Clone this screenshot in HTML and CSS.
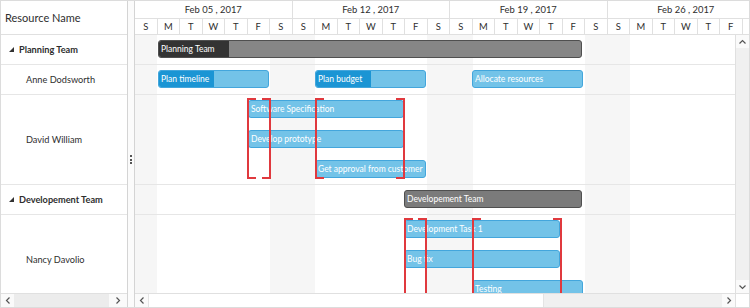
FILE: index.html
```html
<!DOCTYPE html>
<html lang="en">
<head>
  <meta charset="UTF-8">
  <title>Resource Gantt</title>
  <link rel="stylesheet" href="styles.css">
</head>
<body>
  <div class="gantt">
    <!-- Tree grid -->
    <div class="grid-pane">
      <div class="grid-header">Resource Name</div>
      <div class="grid-body">
        <div class="grid-row team row-30">
          <svg class="caret" width="5" height="5" viewBox="0 0 5 5"><polygon points="5,0 5,5 0,5" fill="#333"/></svg>
          Planning Team
        </div>
        <div class="grid-row row-30">Anne Dodsworth</div>
        <div class="grid-row row-90">David William</div>
        <div class="grid-row team row-30">
          <svg class="caret" width="5" height="5" viewBox="0 0 5 5"><polygon points="5,0 5,5 0,5" fill="#333"/></svg>
          Developement Team
        </div>
        <div class="grid-row row-90">Nancy Davolio</div>
      </div>
      <div class="hscroll">
        <div class="sb-btn"><svg width="6" height="7" viewBox="0 0 6 7"><polyline points="4.5,0.5 1.5,3.5 4.5,6.5" fill="none" stroke="#555" stroke-width="1.2"/></svg></div>
        <div class="sb-thumb grey"></div>
        <div class="sb-btn wide"><svg width="6" height="7" viewBox="0 0 6 7"><polyline points="1.5,0.5 4.5,3.5 1.5,6.5" fill="none" stroke="#555" stroke-width="1.2"/></svg></div>
      </div>
    </div>

    <div class="splitter"><span class="grip"></span></div>

    <!-- Chart -->
    <div class="chart-pane">
      <div class="timeline">
        <div class="weeks">
          <div class="week">Feb 05 , 2017</div>
          <div class="week">Feb 12 , 2017</div>
          <div class="week">Feb 19 , 2017</div>
          <div class="week">Feb 26 , 2017</div>
        </div>
        <div class="days">
          <div class="day">S</div><div class="day">M</div><div class="day">T</div><div class="day">W</div><div class="day">T</div><div class="day">F</div><div class="day">S</div>
          <div class="day">S</div><div class="day">M</div><div class="day">T</div><div class="day">W</div><div class="day">T</div><div class="day">F</div><div class="day">S</div>
          <div class="day">S</div><div class="day">M</div><div class="day">T</div><div class="day">W</div><div class="day">T</div><div class="day">F</div><div class="day">S</div>
          <div class="day">S</div><div class="day">M</div><div class="day">T</div><div class="day">W</div><div class="day">T</div><div class="day">F</div><div class="day">S</div>
        </div>
      </div>

      <div class="chart-main">
        <div class="chart-body">
          <div class="chart-row row-30">
            <div class="bar summary lane0" style="left:23px; width:424px">
              <div class="progress" style="width:70px"></div>
              <span class="label">Planning Team</span>
            </div>
          </div>
          <div class="chart-row row-30">
            <div class="bar task lane0" style="left:23px; width:111px">
              <div class="progress" style="width:55px"></div>
              <span class="label">Plan timeline</span>
            </div>
            <div class="bar task lane0" style="left:180px; width:111px">
              <div class="progress" style="width:55px"></div>
              <span class="label">Plan budget</span>
            </div>
            <div class="bar task lane0" style="left:337px; width:111px">
              <span class="label">Allocate resources</span>
            </div>
          </div>
          <div class="chart-row row-90">
            <div class="bar task lane0" style="left:113px; width:156px"><span class="label">Software Specification</span></div>
            <div class="bar task lane1" style="left:113px; width:156px"><span class="label">Develop prototype</span></div>
            <div class="bar task lane2" style="left:180px; width:111px"><span class="label">Get approval from customer</span></div>
            <div class="overlap" style="left:112px; width:24px"></div>
            <div class="overlap" style="left:180px; width:90px"></div>
          </div>
          <div class="chart-row row-30">
            <div class="bar summary plain lane0" style="left:269px; width:178px">
              <span class="label">Developement Team</span>
            </div>
          </div>
          <div class="chart-row row-90">
            <div class="bar task lane0" style="left:269px; width:156px"><span class="label">Development Task 1</span></div>
            <div class="bar task lane1" style="left:269px; width:156px"><span class="label">Bug fix</span></div>
            <div class="bar task lane2" style="left:337px; width:111px"><span class="label">Testing</span></div>
            <div class="overlap" style="left:269px; width:23px"></div>
            <div class="overlap" style="left:337px; width:90px"></div>
          </div>
        </div>
        <div class="vscroll">
          <div class="sb-btn"><svg width="7" height="6" viewBox="0 0 7 6"><polyline points="0.5,4.5 3.5,1.5 6.5,4.5" fill="none" stroke="#555" stroke-width="1.2"/></svg></div>
          <div class="sb-track"></div>
          <div class="sb-btn"><svg width="7" height="6" viewBox="0 0 7 6"><polyline points="0.5,1.5 3.5,4.5 6.5,1.5" fill="none" stroke="#555" stroke-width="1.2"/></svg></div>
        </div>
      </div>

      <div class="hscroll">
        <div class="sb-btn"><svg width="6" height="7" viewBox="0 0 6 7"><polyline points="4.5,0.5 1.5,3.5 4.5,6.5" fill="none" stroke="#555" stroke-width="1.2"/></svg></div>
        <div class="sb-thumb white"></div>
        <div class="sb-track"></div>
        <div class="sb-btn"><svg width="6" height="7" viewBox="0 0 6 7"><polyline points="1.5,0.5 4.5,3.5 1.5,6.5" fill="none" stroke="#555" stroke-width="1.2"/></svg></div>
        <div class="sb-corner"></div>
      </div>
    </div>
  </div>
</body>
</html>
```

FILE: styles.css
```css
* {
  box-sizing: border-box;
}
body {
  margin: 0;
  font-family: Lato, "Open Sans", sans-serif;
  color: #2e2e2e;
  background: #fff;
}
.gantt {
  width: 750px;
  height: 308px;
  border: 1px solid #dcdcdc;
  display: flex;
  overflow: hidden;
}

/* tree grid */
.grid-pane {
  width: 127px;
  flex: 0 0 127px;
  border-right: 1px solid #d4d4d4;
  display: flex;
  flex-direction: column;
}
.grid-header {
  height: 34px;
  border-bottom: 1px solid #e0e0e0;
  display: flex;
  align-items: center;
  padding-left: 4px;
  font-size: 11px;
}
.grid-body {
  flex: 1;
  overflow: hidden;
}
.grid-row {
  display: flex;
  align-items: center;
  padding-left: 25px;
  border-bottom: 1px solid #e6e6e6;
  font-size: 9.2px;
  white-space: nowrap;
}
.grid-row.team {
  padding-left: 8px;
  font-weight: bold;
}
.caret {
  margin-right: 5px;
}
.row-30 {
  height: 30px;
}
.row-90 {
  height: 90px;
}

/* splitter */
.splitter {
  flex: 0 0 7px;
  border-right: 1px solid #d4d4d4;
  background: #fbfbfb;
  display: flex;
  align-items: center;
  justify-content: center;
}
.grip {
  width: 2px;
  height: 9px;
  margin-top: 10px;
  background: repeating-linear-gradient(#555 0 2px, transparent 2px 3.5px);
}

/* chart */
.chart-pane {
  flex: 1;
  min-width: 0;
  display: flex;
  flex-direction: column;
}
.timeline {
  height: 34px;
  flex: 0 0 34px;
  overflow: hidden;
  border-bottom: 1px solid #e0e0e0;
}
.weeks {
  display: flex;
  height: 18px;
  border-bottom: 1px solid #e0e0e0;
}
.week {
  flex: 0 0 157.5px;
  border-right: 1px solid #e0e0e0;
  text-align: center;
  font-size: 9.4px;
  line-height: 17px;
}
.days {
  display: flex;
  height: 15px;
}
.day {
  flex: 0 0 22.5px;
  border-right: 1px solid #e0e0e0;
  text-align: center;
  font-size: 9.4px;
  line-height: 15px;
}
.chart-main {
  flex: 1;
  min-height: 0;
  display: flex;
}
.chart-body {
  flex: 1;
  overflow: hidden;
  background: repeating-linear-gradient(to right, #f6f6f6 0 22.5px, #fff 22.5px 135px, #f6f6f6 135px 157.5px);
}
.chart-row {
  position: relative;
  width: 630px;
  border-bottom: 1px solid #e6e6e6;
}

/* bars */
.bar {
  position: absolute;
  height: 18px;
  border-radius: 3px;
  padding-left: 2px;
  color: #fff;
  font-size: 8.5px;
  line-height: 16px;
  white-space: nowrap;
  overflow: hidden;
}
.lane0 {
  top: 5px;
}
.lane1 {
  top: 35px;
}
.lane2 {
  top: 65px;
}
.bar.task {
  background: #73c3e8;
  border: 1px solid #43a6dc;
}
.bar.summary {
  background: #868686;
  border: 1px solid #4f4f4f;
}
.bar.summary.plain {
  background: #7b7b7b;
}
.progress {
  position: absolute;
  left: 0;
  top: 0;
  bottom: 0;
  background: #1b95d4;
  border-radius: 2px 0 0 2px;
}
.summary .progress {
  background: #333;
}
.label {
  position: relative;
}
.overlap {
  position: absolute;
  top: 3px;
  height: 81px;
  z-index: 2;
  border-left: 2px solid #e0393e;
  border-right: 2px solid #e0393e;
  background:
    linear-gradient(#e0393e, #e0393e) left top / 7px 2px no-repeat,
    linear-gradient(#e0393e, #e0393e) right top / 7px 2px no-repeat,
    linear-gradient(#e0393e, #e0393e) left bottom / 7px 2px no-repeat,
    linear-gradient(#e0393e, #e0393e) right bottom / 7px 2px no-repeat;
}

/* scrollbars */
.vscroll {
  flex: 0 0 14px;
  border-left: 1px solid #e0e0e0;
  display: flex;
  flex-direction: column;
  background: #f4f4f4;
}
.hscroll {
  height: 14px;
  flex: 0 0 14px;
  border-top: 1px solid #e0e0e0;
  display: flex;
  background: #fff;
}
.sb-btn {
  flex: 0 0 13px;
  display: flex;
  align-items: center;
  justify-content: center;
  background: #fafafa;
}
.sb-btn.wide {
  flex-basis: 18px;
}
.sb-track {
  flex: 1;
  background: #f0f0f0;
}
.sb-thumb.grey {
  flex: 1;
  background: #ececec;
}
.sb-thumb.white {
  flex: 0 0 396px;
  background: #fff;
  border-left: 1px solid #e4e4e4;
  border-right: 1px solid #e4e4e4;
}
.sb-corner {
  flex: 0 0 14px;
  border-left: 1px solid #e0e0e0;
  background: #fff;
}
```
